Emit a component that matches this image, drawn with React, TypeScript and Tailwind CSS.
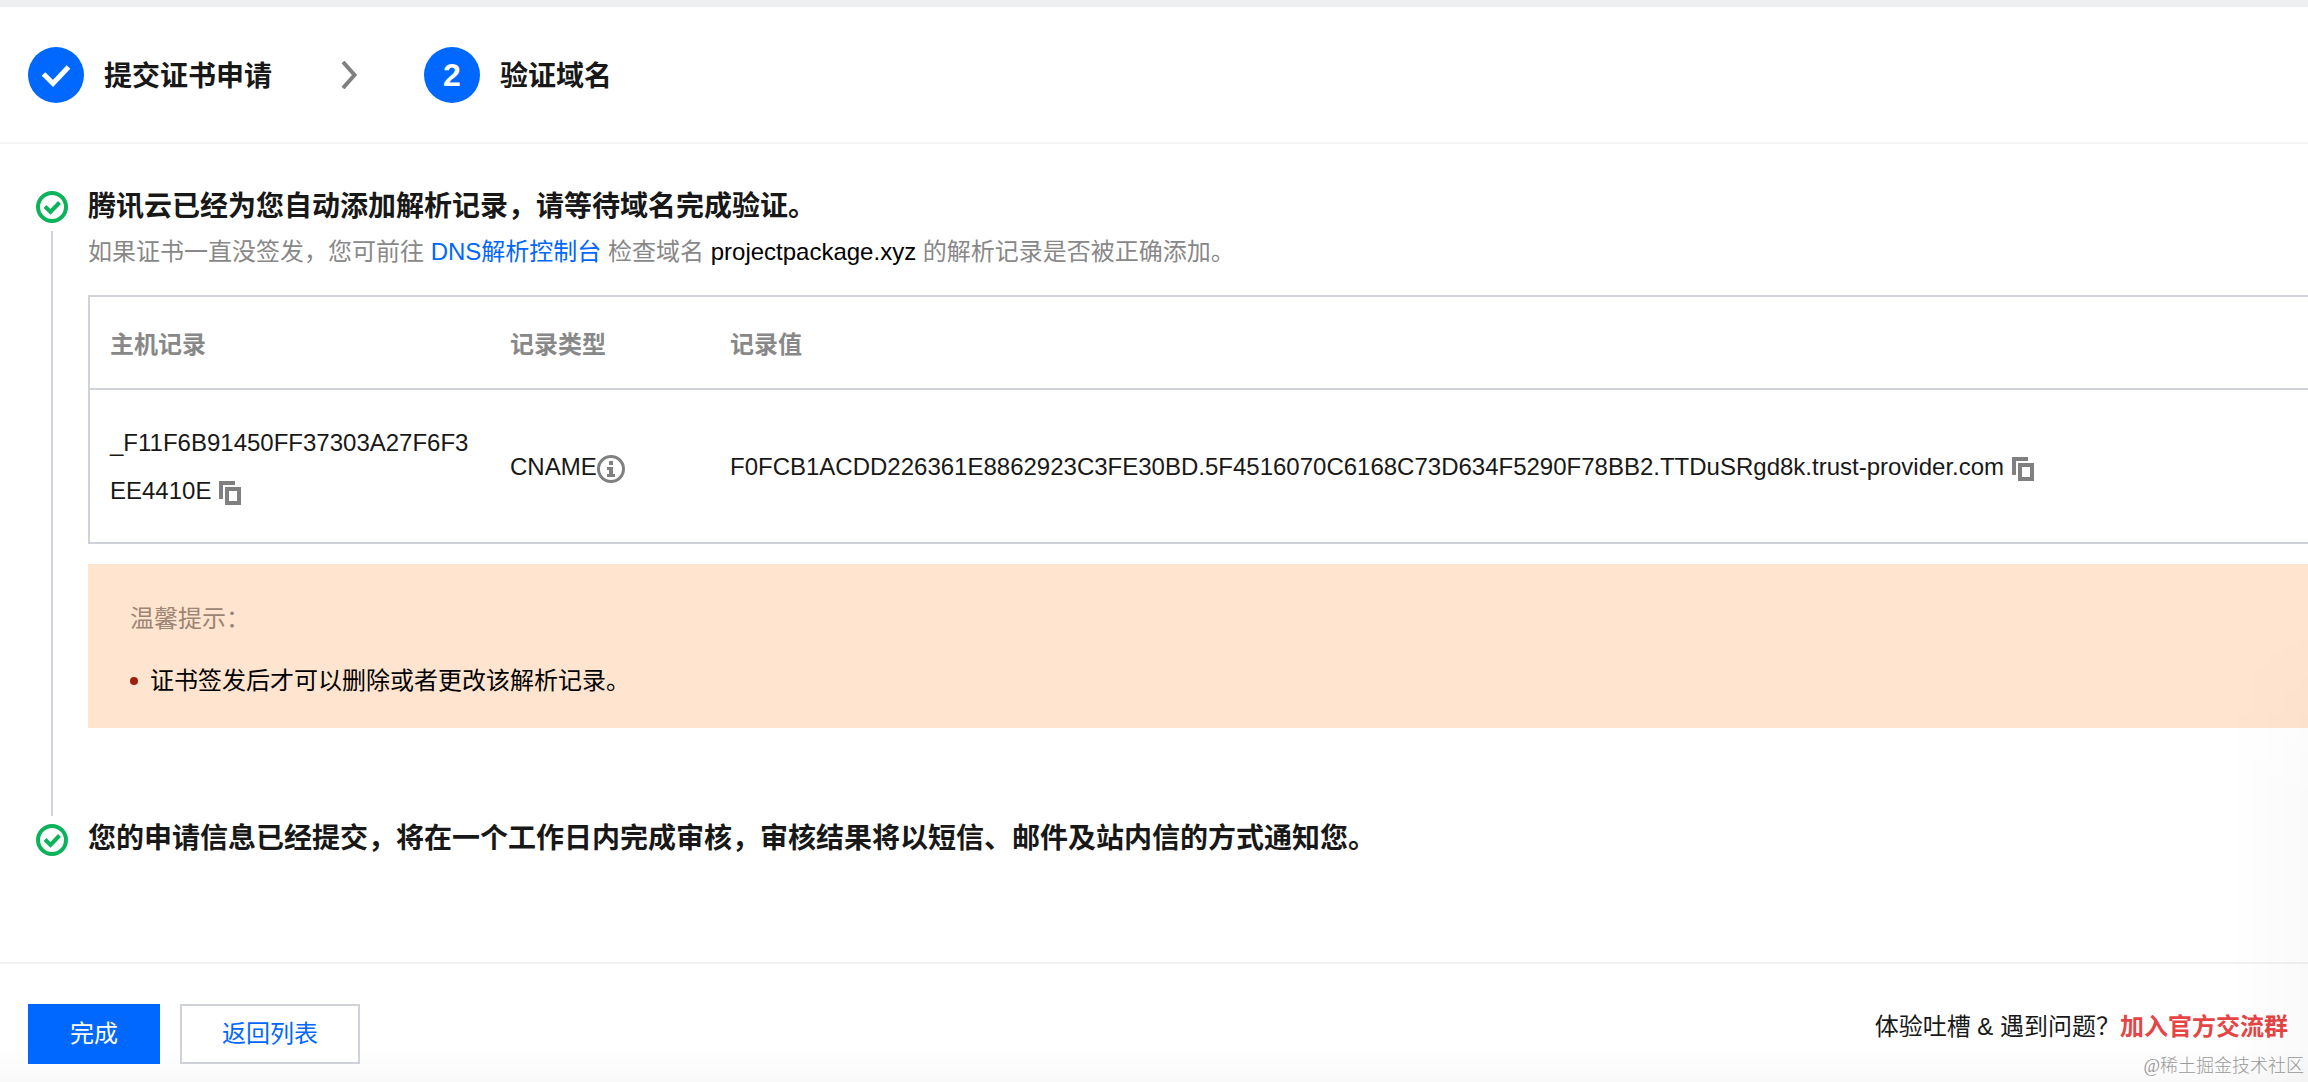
import type { ReactNode } from "react";

const records = [
  {
    host: "_F11F6B91450FF37303A27F6F3EE4410E",
    type: "CNAME",
    value:
      "F0FCB1ACDD226361E8862923C3FE30BD.5F4516070C6168C73D634F5290F78BB2.TTDuSRgd8k.trust-provider.com",
  },
];

const SuccessIcon = () => (
  <svg viewBox="0 0 32 32" className="size-8 flex-none" fill="none" stroke="#0bb35a">
    <circle cx="16" cy="16" r="14" strokeWidth="4" />
    <path d="M9 15.500l5.500 5.500 9-9.500" strokeWidth="4" />
  </svg>
);

const CopyButton = () => (
  <button type="button" aria-label="复制" className="ml-2 inline-block align-middle cursor-pointer">
    <svg viewBox="0 0 22 24" className="h-6 w-[22px]" fill="none" stroke="#808080" strokeWidth="4">
      <path d="M2 18V2h14" />
      <path d="M8 8h12v14H8z" />
    </svg>
  </button>
);

const InfoIcon = () => (
  <svg viewBox="0 0 28 28" className="inline-block size-7 align-middle" fill="none">
    <circle cx="14" cy="14" r="12.5" stroke="#808080" strokeWidth="3" />
    <path d="M12 6h4v4h-4zM10 12h6v7h2v3h-8v-3h2v-4h-2z" fill="#808080" />
  </svg>
);

const Step = ({ marker, title }: { marker: ReactNode; title: string }) => (
  <li className="flex items-center gap-5">
    <span className="flex size-14 items-center justify-center rounded-full bg-[#0067ff] text-[32px] font-bold text-white">
      {marker}
    </span>
    <span className="pt-1 text-[28px] font-bold">{title}</span>
  </li>
);

export default function App() {
  return (
    <div className="relative flex min-h-screen flex-col overflow-x-clip border-t-[7px] border-[#eeeff1] bg-white font-['Liberation_Sans','Noto_Sans_CJK_SC',sans-serif] text-2xl text-[#181818]">
      <header className="border-b-2 border-[#f4f4f5] px-7 pt-10 pb-[39px]">
        <ol className="flex items-center">
          <Step
            title="提交证书申请"
            marker={
              <svg viewBox="0 0 56 56" className="size-14" fill="none" stroke="#fff" strokeWidth="5">
                <path d="M15.500 27l9.500 9.500 15.500-16.500" />
              </svg>
            }
          />
          <li aria-hidden="true" className="mx-[66px]">
            <svg viewBox="0 0 20 28" className="h-7 w-5" fill="none" stroke="#808080" strokeWidth="4">
              <path d="M5 1l11.500 13L5 27" />
            </svg>
          </li>
          <Step title="验证域名" marker="2" />
        </ol>
      </header>

      <main className="flex-1 pt-10 pl-9">
        <section className="flex gap-5">
          <div className="flex flex-none flex-col items-center gap-2 pt-[7px]">
            <SuccessIcon />
            <div className="w-[2px] flex-1 bg-[#cfd3d9]" />
          </div>
          <div className="min-w-0 flex-1 pb-[88px]">
            <h2 className="text-[28px] leading-[46px] font-bold">
              腾讯云已经为您自动添加解析记录，请等待域名完成验证。
            </h2>
            <p className="mt-1 leading-9 text-[#888]">
              如果证书一直没签发，您可前往{" "}
              <a href="#dns" className="text-[#0067ff]">
                DNS解析控制台
              </a>{" "}
              检查域名 <span className="text-black">projectpackage.xyz</span> 的解析记录是否被正确添加。
            </p>

            <table className="mt-[25px] w-full table-fixed border-separate border-spacing-0 border-2 border-r-0 border-[#cfd3d9] text-left">
              <thead className="text-[#888]">
                <tr>
                  <th className="w-[400px] border-b-2 border-[#cfd3d9] px-5 pt-[30px] pb-[25px] leading-9">主机记录</th>
                  <th className="w-[220px] border-b-2 border-[#cfd3d9] px-5 pt-[30px] pb-[25px] leading-9">记录类型</th>
                  <th className="border-b-2 border-[#cfd3d9] px-5 pt-[30px] pb-[25px] leading-9">记录值</th>
                </tr>
              </thead>
              <tbody>
                {records.map((record) => (
                  <tr key={record.host} className="leading-[48px]">
                    <td className="px-5 pt-[29px] pb-[27px] break-all">
                      {record.host}
                      <CopyButton />
                    </td>
                    <td className="px-5 pt-[29px] pb-[27px] whitespace-nowrap">
                      {record.type}
                      <InfoIcon />
                    </td>
                    <td className="px-5 pt-[29px] pb-[27px] whitespace-nowrap">
                      {record.value}
                      <CopyButton />
                    </td>
                  </tr>
                ))}
              </tbody>
            </table>

            <div className="mt-5 bg-[#ffe4d0] px-[42px] pt-[37px] pb-[29px] leading-9">
              <p className="text-[#9c8573]">温馨提示：</p>
              <ul className="mt-[26px]">
                <li className="flex items-center gap-3 text-black">
                  <span className="size-2 rounded-full bg-[#a02010]" />
                  证书签发后才可以删除或者更改该解析记录。
                </li>
              </ul>
            </div>
          </div>
        </section>

        <section className="flex gap-5 pb-24">
          <div className="flex-none pt-2">
            <SuccessIcon />
          </div>
          <h2 className="text-[28px] leading-[46px] font-bold">
            您的申请信息已经提交，将在一个工作日内完成审核，审核结果将以短信、邮件及站内信的方式通知您。
          </h2>
        </section>
      </main>

      <footer className="relative flex items-start justify-between border-t-2 border-[#f1f1f2] bg-linear-to-b from-white from-70% to-[#f9f9f9] px-7 pt-10 pb-[18px]">
        <div className="flex gap-5">
          <button type="button" className="h-[60px] bg-[#0067ff] px-[42px] text-white">
            完成
          </button>
          <button type="button" className="h-[60px] border-2 border-[#cfd3d9] bg-white px-10 text-[#0067ff]">
            返回列表
          </button>
        </div>
        <p className="-mr-2 pt-[5px] leading-9">
          体验吐槽 &amp; 遇到问题？
          <a href="#group" className="font-bold text-[#e54545]">
            加入官方交流群
          </a>
        </p>
        <span className="absolute right-1 bottom-1 font-['Liberation_Serif','Noto_Sans_CJK_SC',serif] text-lg leading-6 font-light text-[#999]">
          @稀土掘金技术社区
        </span>
      </footer>

      {/* soft shade on the right edge of the page */}
      <div className="pointer-events-none absolute right-0 bottom-0 h-[460px] w-20 bg-linear-to-r from-transparent to-black/2 mask-t-from-60%" />
    </div>
  );
}
